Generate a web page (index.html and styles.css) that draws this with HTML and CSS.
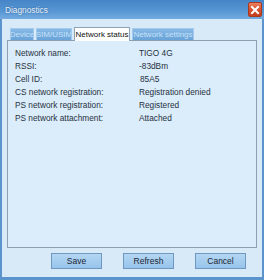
FILE: index.html
```html
<!DOCTYPE html>
<html>
<head>
<meta charset="utf-8">
<link rel="stylesheet" href="styles.css">
</head>
<body>
<div class="window">
  <div class="titlebar">
    <span class="title">Diagnostics</span>
    <span class="close">
      <svg width="10" height="10" viewBox="0 0 10 10"><path d="M2 2 L8 8 M8 2 L2 8" stroke="#fff" stroke-width="2" stroke-linecap="square"/></svg>
    </span>
  </div>
  <div class="body">
    <div class="tabs">
      <div class="tab tab-device">Device</div>
      <div class="tab tab-sim">SIM/USIM</div>
      <div class="tab tab-active">Network status</div>
      <div class="tab tab-settings">Network settings</div>
    </div>
    <div class="panel">
      <div class="grid">
        <span>Network name:</span><span>TIGO 4G</span>
        <span>RSSI:</span><span>-83dBm</span>
        <span>Cell ID:</span><span class="cell">85A5</span>
        <span>CS network registration:</span><span>Registration denied</span>
        <span>PS network registration:</span><span>Registered</span>
        <span>PS network attachment:</span><span>Attached</span>
      </div>
    </div>
    <div class="buttons">
      <button class="btn">Save</button>
      <button class="btn">Refresh</button>
      <button class="btn">Cancel</button>
    </div>
  </div>
</div>
</body>
</html>
```
FILE: styles.css
```css
html, body {
  margin: 0;
  padding: 0;
}
body {
  width: 264px;
  height: 280px;
  overflow: hidden;
  font-family: "Liberation Sans", Arial, sans-serif;
  font-size: 8.3px;
  color: #1c2530;
}
.window {
  box-sizing: border-box;
  width: 264px;
  height: 280px;
  display: flex;
  flex-direction: column;
  background: #d8e9f8;
  border-left: 2px solid #5b94cc;
  border-right: 2px solid #5b94cc;
  border-bottom: 3px solid #5b94cc;
}
.titlebar {
  height: 19px;
  flex: none;
  margin: 0 -2px;
  display: flex;
  align-items: center;
  justify-content: space-between;
  padding: 0 2px 0 5px;
  background: linear-gradient(to bottom, #4585c7 0%, #5897d4 60%, #74abdf 100%);
}
.title {
  color: #e8f2fc;
  font-size: 8.3px;
  text-shadow: 0 0 2px rgba(20, 60, 110, 0.6);
}
.close {
  width: 14px;
  height: 15px;
  display: flex;
  align-items: center;
  justify-content: center;
  box-sizing: border-box;
  border: 1px solid #a83a22;
  background: linear-gradient(to bottom, #ea7f5e 0%, #d8502c 50%, #c43f1e 100%);
  border-radius: 2px;
}
.body {
  flex: 1;
  display: flex;
  flex-direction: column;
  padding: 7px 5px 0 5px;
}
.tabs {
  display: flex;
  align-items: flex-end;
  gap: 2px;
  padding-left: 3px;
  height: 14px;
  flex: none;
}
.tab {
  box-sizing: border-box;
  height: 12px;
  display: flex;
  align-items: center;
  justify-content: center;
  background: linear-gradient(to bottom, #86b9e6 0%, #6aa3d8 100%);
  border: 1px solid #a4cbec;
  border-bottom: none;
  color: #c4e0f7;
  font-size: 8px;
  white-space: nowrap;
  overflow: hidden;
  padding: 0;
}
.tab-device { width: 24px; }
.tab-sim { width: 36px; }
.tab-settings { width: 62px; }
.tab-active {
  width: 56px;
  height: 14px;
  background: #ffffff;
  border: 1px solid #8fa3b6;
  border-bottom: none;
  color: #111;
  margin-bottom: -1px;
  position: relative;
  z-index: 1;
}
.panel {
  flex: 1;
  box-sizing: border-box;
  border: 1px solid #8c9fb1;
  background: #dbecfb;
  padding: 6px 7px 0 7px;
}
.grid {
  display: grid;
  grid-template-columns: 124px 1fr;
  grid-auto-rows: 13px;
  line-height: 13px;
  color: #26323e;
}
.cell {
  padding-left: 1px;
}
.buttons {
  flex: none;
  height: 29px;
  display: flex;
  justify-content: flex-end;
  align-items: flex-start;
  gap: 21px;
  padding: 5px 11px 0 0;
  box-sizing: border-box;
}
.btn {
  width: 51px;
  height: 16px;
  box-sizing: border-box;
  border: 1px solid #6f98c0;
  background: linear-gradient(to bottom, #b4d6f3 0%, #97c4ec 100%);
  font-family: "Liberation Sans", Arial, sans-serif;
  font-size: 8.5px;
  color: #1b2633;
  padding: 0;
  margin: 0;
}
```
